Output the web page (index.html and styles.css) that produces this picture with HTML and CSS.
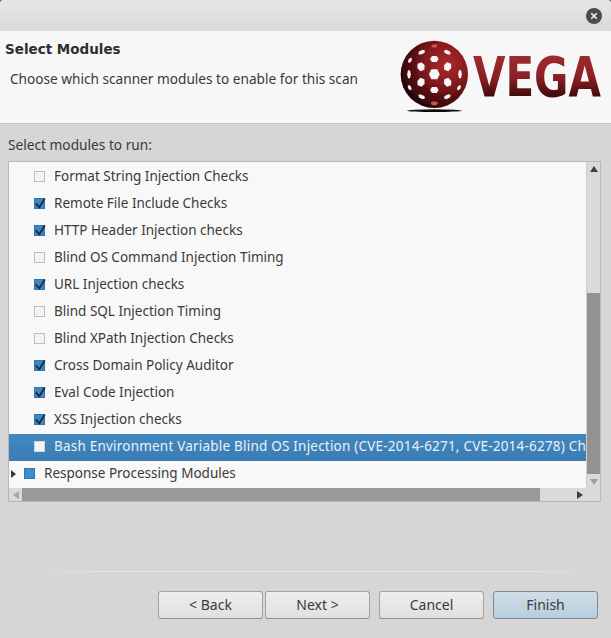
FILE: index.html
```html
<!DOCTYPE html>
<html lang="en">
<head>
<meta charset="utf-8">
<title>Select Modules</title>
<link rel="stylesheet" href="styles.css">
</head>
<body>
<div class="window">
  <div class="titlebar">
    <button class="close" aria-label="Close">
      <svg width="16" height="16" viewBox="0 0 16 16"><path d="M5.2 5.2l5.6 5.6M10.8 5.2l-5.6 5.6" stroke="#f2f2f2" stroke-width="1.6" fill="none"/></svg>
    </button>
  </div>
  <header class="banner">
    <div class="banner-text">
      <h1 class="banner-title">Select Modules</h1>
      <p class="banner-desc">Choose which scanner modules to enable for this scan</p>
    </div>
    <svg class="logo" width="213" height="85" viewBox="0 0 639 255">
      <defs>
        <radialGradient id="ball" cx="0.68" cy="0.34" r="0.75">
          <stop offset="0" stop-color="#a82a2c"/>
          <stop offset="0.4" stop-color="#8a1c20"/>
          <stop offset="0.75" stop-color="#4c0a0e"/>
          <stop offset="1" stop-color="#1a0406"/>
        </radialGradient>
        <linearGradient id="word" x1="0" y1="0" x2="0" y2="1">
          <stop offset="0.1" stop-color="#a32e31"/>
          <stop offset="0.5" stop-color="#8c2024"/>
          <stop offset="0.85" stop-color="#360608"/>
        </linearGradient>
        <filter id="soft" x="-5%" y="-5%" width="110%" height="110%"><feGaussianBlur stdDeviation="1"/></filter>
        <polygon id="hex" points="-16,0 -9,-15 9,-15 16,0 9,15 -9,15"/>
      </defs>
      <g filter="url(#soft)">
        <circle cx="118" cy="118" r="101" fill="url(#ball)"/>
        <ellipse cx="118" cy="227" rx="82" ry="4" fill="#111"/>
        <g fill="#f7f7f7">
          <use href="#hex" transform="translate(118 118)"/>
          <use href="#hex" transform="translate(118 72) scale(.8 .62)"/>
          <use href="#hex" transform="translate(118 165) scale(.8 .62)"/>
          <use href="#hex" transform="translate(78 95) rotate(-20) scale(.72 .8)"/>
          <use href="#hex" transform="translate(158 95) rotate(20) scale(.72 .8)"/>
          <use href="#hex" transform="translate(78 142) rotate(20) scale(.72 .8)"/>
          <use href="#hex" transform="translate(158 142) rotate(-20) scale(.72 .8)"/>
          <use href="#hex" transform="translate(42 118) scale(.34 .8)"/>
          <use href="#hex" transform="translate(195 118) scale(.34 .8)"/>
          <use href="#hex" transform="translate(80 52) rotate(-25) scale(.7 .36)"/>
          <use href="#hex" transform="translate(157 52) rotate(25) scale(.7 .36)"/>
          <use href="#hex" transform="translate(80 185) rotate(25) scale(.7 .36)"/>
          <use href="#hex" transform="translate(157 185) rotate(-25) scale(.7 .36)"/>
          <use href="#hex" transform="translate(45 76) rotate(30) scale(.3 .5)"/>
          <use href="#hex" transform="translate(44 158) rotate(-30) scale(.3 .5)"/>
          <use href="#hex" transform="translate(192 158) rotate(30) scale(.3 .5)"/>
        </g>
        <g fill="#c9565a">
          <use href="#hex" transform="translate(118 33) scale(.6 .3)"/>
          <use href="#hex" transform="translate(118 205) scale(.7 .36)"/>
        </g>
      </g>
      <text class="logo-word" x="234" y="183" textLength="384" lengthAdjust="spacingAndGlyphs" fill="url(#word)">VEGA</text>
    </svg>
  </header>
  <main class="body">
    <div class="field-label">Select modules to run:</div>
    <div class="tree">
      <div class="tree-view">
        <ul class="rows">
          <li class="row"><span class="check"></span><span class="row-label">Format String Injection Checks</span></li>
          <li class="row"><span class="check on"><svg width="11" height="11" viewBox="0 0 11 11"><path d="M1.7 5.3l3.6 4L10.8 .6" class="tick"/></svg></span><span class="row-label">Remote File Include Checks</span></li>
          <li class="row"><span class="check on"><svg width="11" height="11" viewBox="0 0 11 11"><path d="M1.7 5.3l3.6 4L10.8 .6" class="tick"/></svg></span><span class="row-label">HTTP Header Injection checks</span></li>
          <li class="row"><span class="check"></span><span class="row-label">Blind OS Command Injection Timing</span></li>
          <li class="row"><span class="check on"><svg width="11" height="11" viewBox="0 0 11 11"><path d="M1.7 5.3l3.6 4L10.8 .6" class="tick"/></svg></span><span class="row-label">URL Injection checks</span></li>
          <li class="row"><span class="check"></span><span class="row-label">Blind SQL Injection Timing</span></li>
          <li class="row"><span class="check"></span><span class="row-label">Blind XPath Injection Checks</span></li>
          <li class="row"><span class="check on"><svg width="11" height="11" viewBox="0 0 11 11"><path d="M1.7 5.3l3.6 4L10.8 .6" class="tick"/></svg></span><span class="row-label">Cross Domain Policy Auditor</span></li>
          <li class="row"><span class="check on"><svg width="11" height="11" viewBox="0 0 11 11"><path d="M1.7 5.3l3.6 4L10.8 .6" class="tick"/></svg></span><span class="row-label">Eval Code Injection</span></li>
          <li class="row"><span class="check on"><svg width="11" height="11" viewBox="0 0 11 11"><path d="M1.7 5.3l3.6 4L10.8 .6" class="tick"/></svg></span><span class="row-label">XSS Injection checks</span></li>
          <li class="row selected"><span class="check"></span><span class="row-label">Bash Environment Variable Blind OS Injection (CVE-2014-6271, CVE-2014-6278) Checks</span></li>
          <li class="row parent"><span class="expander"></span><span class="square"></span><span class="row-label">Response Processing Modules</span></li>
        </ul>
      </div>
      <div class="vscroll">
        <span class="arrow up"></span>
        <div class="vtrack"><div class="vthumb"></div></div>
        <span class="arrow down"></span>
      </div>
      <div class="hscroll">
        <span class="arrow left"></span>
        <div class="htrack"><div class="hthumb"></div></div>
        <span class="arrow right"></span>
      </div>
      <div class="corner"></div>
    </div>
  </main>
  <footer class="footer">
    <div class="divider"></div>
    <div class="buttons">
      <div class="nav-group">
        <button class="btn">&lt; Back</button>
        <button class="btn">Next &gt;</button>
      </div>
      <button class="btn">Cancel</button>
      <button class="btn primary">Finish</button>
    </div>
  </footer>
</div>
</body>
</html>
```
FILE: styles.css
```css
* { box-sizing: border-box; }
html, body { margin: 0; padding: 0; height: 100%; overflow: hidden; background: #6a6a6a; }
.window {
  width: 611px; height: 638px;
  display: flex; flex-direction: column;
  background: #d6d6d6;
  border-radius: 4px 4px 0 0;
  overflow: hidden;
  font-family: "Noto Sans", sans-serif;
  font-size: 13.5px;
  color: #3a3a3a;
}
.titlebar {
  height: 31px; flex: none;
  display: flex; justify-content: flex-end; align-items: center;
  padding-right: 9px;
  background: linear-gradient(#e6e6e6, #d9d9d9);
}
.close {
  width: 16px; height: 16px; padding: 0; border: 0; border-radius: 50%;
  background: #4b4b4b; display: flex;
}
.banner {
  height: 93px; flex: none;
  display: flex; justify-content: space-between;
  background: #f7f7f7;
  border-bottom: 1px solid #c4c4c4;
  padding: 4px 3px 0 5px;
}
.banner-title {
  font-family: "DejaVu Sans", sans-serif;
  margin: 6px 0 0; font-size: 13.5px; font-weight: 700; line-height: 16px; color: #2e2e2e;
}
.banner-desc { margin: 14px 0 0 5px; line-height: 16px; font-size: 13.65px; }
.logo { flex: none; display: block; }
.logo-word {
  font-family: "DejaVu Sans", sans-serif; font-weight: 700; font-size: 165px;
}
.body { flex: none; height: 378px; padding: 13px 10px 0 8px; display: flex; flex-direction: column; }
.field-label { height: 16px; line-height: 16px; margin-bottom: 8px; font-size: 13.7px; }
.tree {
  height: 341px;
  display: grid;
  grid-template-columns: 1fr 14px;
  grid-template-rows: 1fr 13px;
  border: 1px solid #b8b8b8;
  background: #f8f8f8;
}
.tree-view { overflow: hidden; padding-top: 2px; min-width: 0; }
.rows { list-style: none; margin: 0; padding: 0; width: max-content; min-width: 100%; }
.row {
  height: 27px; display: flex; align-items: center;
  padding-left: 25px; white-space: nowrap; padding-bottom: 2px;
}
.row-label { margin-left: 9px; padding-bottom: 2px; }
.check {
  width: 11px; height: 11px; flex: none;
  border: 1px solid #bdbdbd; background: #f4f4f4;
  display: block;
}
.check.on { background: #3b86c6; border-color: #3274ad; }
.check svg { display: block; margin: -1px 0 0 -1px; overflow: visible; }
.tick { fill: none; stroke: #1e2a34; stroke-width: 1.8; }
.selected {
  background: linear-gradient(#4388c0, #3a7cb4);
  color: #eaf2f8;
  width: 577px; overflow: hidden;
}
.selected .check { background: #f4f4f4; border-color: #d0d8de; }
.selected .row-label { letter-spacing: .21px; }
.parent { padding-left: 2px; }
.expander {
  width: 0; height: 0; flex: none; margin-right: 8px;
  border-left: 5px solid #3a3a3a;
  border-top: 4px solid transparent; border-bottom: 4px solid transparent;
}
.square {
  width: 11px; height: 11px; flex: none;
  background: #3b8bd0; border: 1px solid #3274ad;
}
.vscroll {
  background: #dadada; border-left: 1px solid #cfcfcf;
  display: flex; flex-direction: column; align-items: stretch;
}
.vtrack { flex: 1; padding-top: 118px; padding-bottom: 0; }
.vthumb { height: 181px; background: #929292; }
.hscroll {
  background: #dadada; display: flex; align-items: center; height: 13px;
}
.htrack { flex: 1; align-self: stretch; }
.hthumb { width: 518px; height: 100%; background: #999; }
.corner { background: #dadada; }
.arrow { flex: none; display: flex; align-items: center; justify-content: center; position: relative; }
.up, .down { height: 13px; }
.left, .right { width: 13px; align-self: stretch; }
.arrow::before { content: ""; width: 0; height: 0; border-style: solid; border-color: transparent; }
.up::before { border-width: 0 4px 6px; border-bottom-color: #3f3f3f; }
.down::before { border-width: 6px 4px 0; border-top-color: #a0a0a0; }
.left::before { border-width: 4px 6px 4px 0; border-right-color: #a8a8a8; }
.right::before { border-width: 4px 0 4px 6px; border-left-color: #3f3f3f; }
.footer { flex: 1; display: flex; flex-direction: column; padding-top: 69px; }
.divider {
  height: 1px; flex: none; margin-left: 30px; margin-right: 10px;
  background: linear-gradient(90deg, #d6d6d6, #e6e6e6 15%, #e6e6e6 85%, #d6d6d6);
}
.buttons {
  display: flex; justify-content: flex-end; gap: 9px;
  padding: 19px 13px 0 0;
}
.nav-group { display: flex; gap: 2px; }
.btn {
  width: 105px; height: 28px; padding: 0 0 2px;
  font: inherit; font-size: 14px; color: inherit;
  border: 1px solid #a3a3a3; border-bottom-color: #8e8e8e;
  border-radius: 3px;
  background: linear-gradient(#eeeeee, #e0e0e0);
}
.primary {
  background: linear-gradient(#cfdde6, #b8cedd);
  border-color: #7f8a92;
}
```
